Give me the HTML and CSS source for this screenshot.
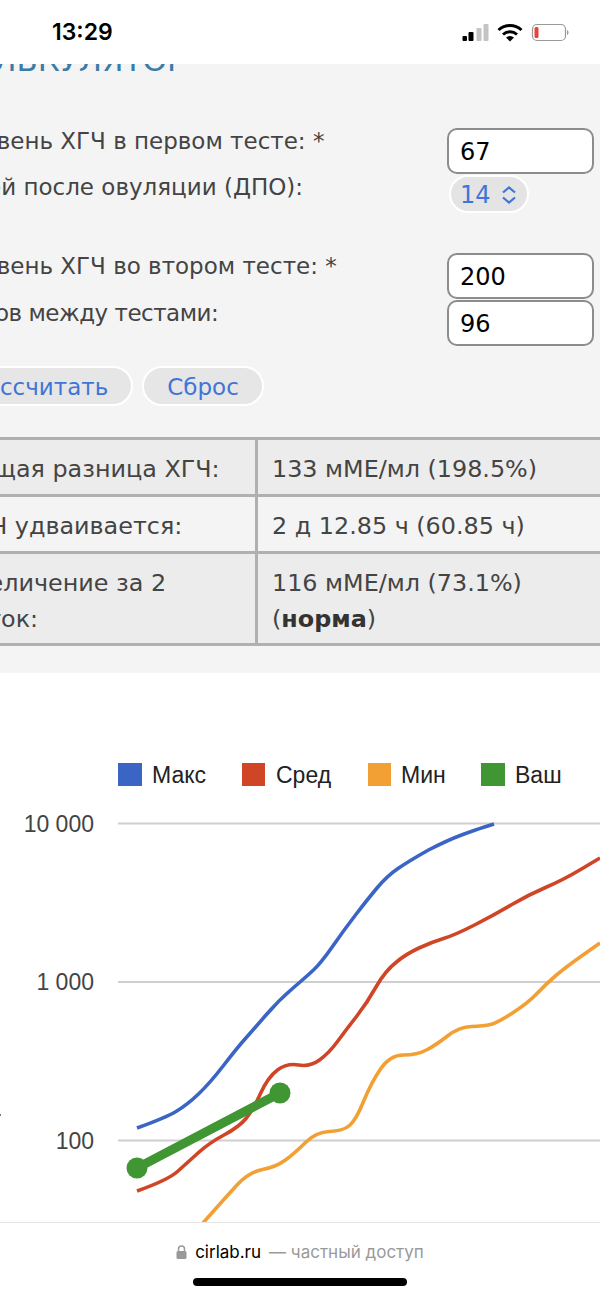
FILE: index.html
```html
<!DOCTYPE html>
<html lang="ru">
<head>
    <meta charset="UTF-8">
    <meta name="viewport" content="width=device-width, initial-scale=1.0">
    <title>Калькулятор ХГЧ</title>
    <link rel="stylesheet" href="styles.css">
</head>
<body>
    <div class="statusbar">
        <span class="time">13:29</span>
        <svg class="status-icons" width="110" height="24" viewBox="0 0 110 24">
            <rect x="2.500" y="15" width="4.500" height="5" rx="1" fill="#000"/>
            <rect x="8.500" y="11" width="5" height="9" rx="1" fill="#000"/>
            <rect x="16.500" y="7" width="5" height="13" rx="1" fill="#c4c4c4"/>
            <rect x="23.500" y="3" width="5" height="17" rx="1" fill="#c4c4c4"/>
            <path d="M38.500 9a17 17 0 0 1 23 0M43 13.500a10.500 10.500 0 0 1 14 0" fill="none" stroke="#000" stroke-width="3"/>
            <path d="M46 16.500a6 6 0 0 1 8 0l-4 4z" fill="#000"/>
            <rect x="72.500" y="3.500" width="33" height="16" rx="4.500" fill="none" stroke="#999" stroke-width="1.200"/>
            <rect x="74.500" y="6" width="4" height="11" rx="1.500" fill="#e8423c"/>
            <path d="M107 9v5c1-.5 1.500-1.500 1.500-2.500s-.5-2-1.500-2.500z" fill="#999"/>
        </svg>
    </div>

    <div class="panel">
        <div class="title-clip"><h1 class="title">Калькулятор</h1></div>

        <form class="calc">
            <div class="group">
                <div class="field">
                    <label>Уровень ХГЧ в первом тесте: *</label>
                    <input class="num" type="text" value="67">
                </div>
                <div class="field field-select">
                    <label>Дней после овуляции (ДПО):</label>
                    <span class="pick">14
                        <svg width="18" height="20" viewBox="0 0 18 20"><path d="M3 7.500L9 2.500l6 5M3 12.500L9 17.500l6-5" fill="none" stroke="#3f74d8" stroke-width="2.200"/></svg>
                    </span>
                </div>
            </div>
            <div class="group group-last">
                <div class="field">
                    <label>Уровень ХГЧ во втором тесте: *</label>
                    <input class="num" type="text" value="200">
                </div>
                <div class="field">
                    <label class="tight">Часов между тестами:</label>
                    <input class="num" type="text" value="96">
                </div>
            </div>
            <div class="buttons">
                <button type="button">Рассчитать</button>
                <button type="button">Сброс</button>
            </div>
        </form>

        <table class="results">
            <tr>
                <td class="name">Общая разница ХГЧ:</td>
                <td>133 мМЕ/мл (198.5%)</td>
            </tr>
            <tr>
                <td class="name">ХГЧ удваивается:</td>
                <td>2 д 12.85 ч (60.85 ч)</td>
            </tr>
            <tr>
                <td class="name">Увеличение за 2 суток:</td>
                <td>116 мМЕ/мл (73.1%) (<b>норма</b>)</td>
            </tr>
        </table>
    </div>

    <div class="chart">
        <svg width="600" height="549" viewBox="0 673 600 549">
            <!-- легенда -->
            <rect x="118" y="763" width="24" height="23" fill="#3b65c4"/>
            <text class="legend" x="152" y="783">Макс</text>
            <rect x="242" y="763" width="23" height="23" fill="#cf4526"/>
            <text class="legend" x="276" y="783">Сред</text>
            <rect x="368" y="763" width="23" height="23" fill="#f2a033"/>
            <text class="legend" x="401" y="783">Мин</text>
            <rect x="481" y="763" width="24" height="23" fill="#3f9632"/>
            <text class="legend" x="515" y="783">Ваш</text>

            <!-- сетка -->
            <path d="M118 823.500H600M118 982H600M118 1140.500H600" fill="none" stroke="#cfcfcf" stroke-width="2"/>
            <text class="axis" x="94" y="832">10 000</text>
            <text class="axis" x="94" y="990">1 000</text>
            <text class="axis" x="94" y="1149">100</text>
            <rect x="0" y="1114" width="1" height="2" fill="#777"/>

            <!-- кривые -->
            <path class="curve" stroke="#3b65c4" d="M137 1128Q165 1118 176 1111.500Q187 1105 198.500 1094Q210 1083 223.500 1065.500Q237 1048 245 1039Q253 1030 266 1015Q279 1000 292.500 988.500Q306 977 313.500 970Q321 963 332.500 946.500Q344 930 355.500 915Q367 900 377 888Q387 876 398 868.500Q409 861 428.500 850Q448 840 461.500 835Q475 830 484.500 827L494 824"/>
            <path class="curve" stroke="#cf4526" d="M137 1191Q168 1180 177.500 1171.500Q187 1163 198 1153Q209 1143 224 1135Q239 1127 246 1118.500Q253 1110 260.500 1093.500Q268 1077 277.500 1070Q287 1063 298.500 1065Q310 1067 319.500 1060Q329 1053 337.500 1041.500Q346 1030 356.500 1016.500Q367 1003 376 987Q385 971 396.500 962Q406 954 419 948Q432 942 443.500 938.500Q455 935 474.500 925Q494 915 511 905Q528 895 545.500 887.500Q563 880 581.500 869L600 858"/>
            <path class="curve" stroke="#f2a033" d="M203 1223Q226 1197 237.500 1184.500Q249 1172 262.500 1169.500Q276 1167 285.500 1160Q295 1153 305.500 1142.500Q316 1132 329.500 1131.500Q343 1131 349.500 1125.500Q356 1120 363.500 1101.500Q371 1083 380.500 1069Q390 1055 403.500 1055Q417 1055 426.500 1050Q436 1045 447.500 1036Q459 1027 471.500 1026.500Q484 1026 490.500 1024.500Q497 1023 512.500 1013Q528 1003 537.500 993Q547 983 556.500 975Q566 967 583 955L600 943"/>
            <path d="M137 1168L280 1093" fill="none" stroke="#3f9632" stroke-width="9"/>
            <circle cx="137" cy="1168" r="10.500" fill="#3f9632"/>
            <circle cx="280" cy="1093" r="10.500" fill="#3f9632"/>
        </svg>
    </div>

    <div class="bottombar">
        <div class="address">
            <svg width="11" height="14" viewBox="0 0 11 14"><path d="M2.500 6V4a3 3 0 0 1 6 0v2" fill="none" stroke="#999" stroke-width="1.500"/><rect x="0.500" y="6" width="10" height="8" rx="1.500" fill="#999"/></svg>
            <span class="host">cirlab.ru</span>
            <span class="note">— частный доступ</span>
        </div>
        <div class="home"></div>
    </div>
</body>
</html>
```

FILE: styles.css
```css
html, body {
    margin: 0;
    padding: 0;
}
body {
    width: 600px;
    height: 1298px;
    overflow: hidden;
    background-color: #fff;
    font-family: "DejaVu Sans", Verdana, sans-serif;
    color: #444;
}
.statusbar {
    height: 64px;
    display: flex;
    justify-content: space-between;
    align-items: center;
    padding: 0 30px 0 52px;
    box-sizing: border-box;
}
.time {
    font-family: Inter, Roboto, sans-serif;
    font-size: 23px;
    font-weight: 600;
    color: #000;
}
.status-icons {
    margin-top: 1px;
}
.panel {
    height: 609px;
    background-color: #f4f4f4;
    overflow: hidden;
}
.title-clip {
    height: 64px;
    overflow: hidden;
}
.title {
    margin: -22px 0 0 -50px;
    font-size: 31px;
    line-height: 36px;
    font-weight: normal;
    text-transform: uppercase;
    color: #3a7ca5;
}
.calc {
    margin-left: -46px;
    padding-right: 6px;
}
.group {
    margin-bottom: 40px;
}
.group-last {
    margin-bottom: 20px;
}
.field {
    display: flex;
    justify-content: space-between;
    align-items: flex-start;
    margin-bottom: 1px;
}
.field label {
    font-size: 23px;
    line-height: 26px;
}
.field .tight {
    letter-spacing: -0.5px;
}
.field-select label {
    margin-top: -1px;
}
.num {
    width: 147px;
    height: 46px;
    box-sizing: border-box;
    border: 2px solid #8c8c8c;
    border-radius: 10px;
    background-color: #fff;
    padding: 2px 11px 0;
    font-family: "DejaVu Sans", Verdana, sans-serif;
    font-size: 24px;
    color: #000;
}
.field-select {
    padding-right: 65px;
    margin-top: 1px;
}
.pick {
    width: 80px;
    height: 38px;
    box-sizing: border-box;
    border: 2px solid #fff;
    border-radius: 19px;
    background-color: #e4e4e4;
    display: flex;
    align-items: center;
    padding: 2px 0 0 9px;
    gap: 9px;
    font-size: 24px;
    color: #3f74d8;
}
.buttons {
    display: flex;
    gap: 9px;
    margin-left: -7px;
}
button {
    height: 40px;
    padding: 2px 23px 0;
    border: 2px solid #fff;
    border-radius: 20px;
    background-color: #e6e6e6;
    font-family: "DejaVu Sans", Verdana, sans-serif;
    font-size: 23px;
    color: #3f74d8;
}
.results {
    width: 660px;
    margin: 31px 0 0 -46px;
    border-collapse: collapse;
    font-size: 23.85px;
    line-height: 36px;
}
.results td {
    border: 3px solid #b0b0b0;
    padding: 11px 16px 7px 14px;
    vertical-align: top;
}
.results tr:nth-child(odd) {
    background-color: #ececec;
}
.results tr:last-child td {
    padding-bottom: 6px;
}
.results .name {
    width: 279px;
    padding-left: 3px;
}
.results b {
    color: #333;
}
.chart {
    height: 549px;
    overflow: hidden;
}
.chart svg {
    display: block;
}
.legend {
    font-family: "Liberation Sans", Arial, sans-serif;
    font-size: 23px;
    fill: #222;
}
.axis {
    font-family: "Liberation Sans", Arial, sans-serif;
    font-size: 23px;
    fill: #444;
    text-anchor: end;
}
.curve {
    fill: none;
    stroke-width: 3.6;
}
.bottombar {
    height: 76px;
    box-sizing: border-box;
    border-top: 1px solid #e5e5e5;
    display: flex;
    flex-direction: column;
    align-items: center;
}
.address {
    margin-top: 19px;
    display: flex;
    align-items: center;
    gap: 8px;
    font-family: Inter, Roboto, sans-serif;
    font-size: 17px;
    line-height: 20px;
}
.host {
    color: #000;
}
.note {
    color: #9a9a9a;
}
.home {
    width: 214px;
    height: 8px;
    margin-top: 16px;
    border-radius: 4px;
    background-color: #000;
}
```
